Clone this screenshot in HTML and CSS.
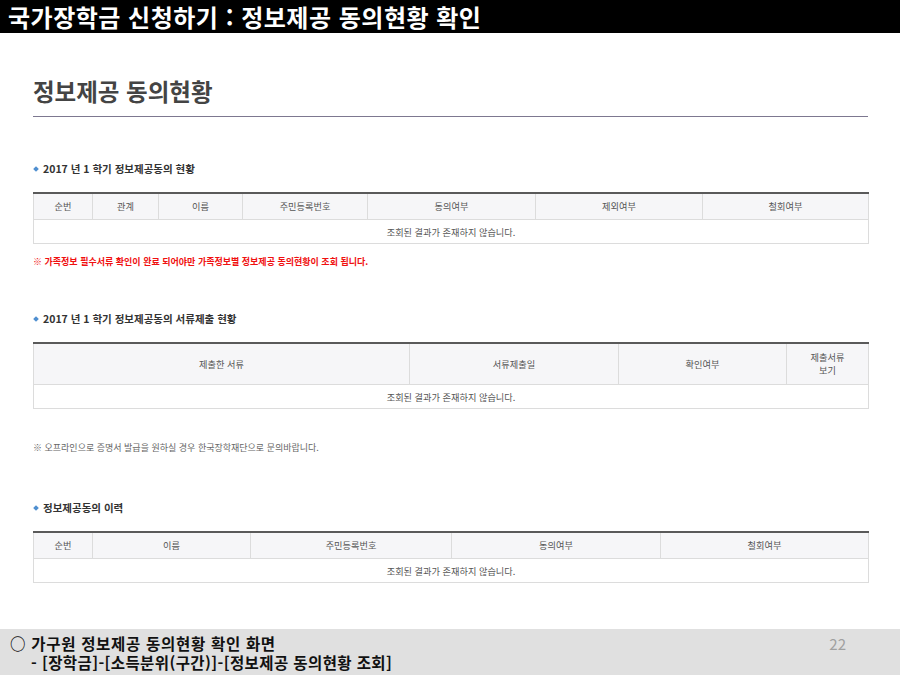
FILE: index.html
```html
<!DOCTYPE html>
<html lang="ko">
<head>
    <meta charset="UTF-8">
    <meta name="viewport" content="width=device-width, initial-scale=1.0">
    <title>정보제공 동의현황 확인</title>
    <link rel="stylesheet" href="styles.css">
</head>
<body>

<div class="slide">
    <div class="topbar">
        <h1>국가장학금 신청하기 : 정보제공 동의현황 확인</h1>
    </div>

    <div class="content">
        <h2 class="page-title">정보제공 동의현황</h2>

        <h3 class="sec-title sec-first"><span class="bullet"></span>2017 년 1 학기 정보제공동의 현황</h3>
        <table class="grid">
            <colgroup>
                <col style="width:59px"><col style="width:66px"><col style="width:84px"><col style="width:125px">
                <col style="width:168px"><col style="width:167px"><col style="width:166px">
            </colgroup>
            <thead>
                <tr class="head-row">
                    <th>순번</th><th>관계</th><th>이름</th><th>주민등록번호</th><th>동의여부</th><th>제외여부</th><th>철회여부</th>
                </tr>
            </thead>
            <tbody>
                <tr><td colspan="7">조회된 결과가 존재하지 않습니다.</td></tr>
            </tbody>
        </table>
        <p class="note-red">※ 가족정보 필수서류 확인이 완료 되어야만 가족정보별 정보제공 동의현황이 조회 됩니다.</p>

        <h3 class="sec-title sec-second"><span class="bullet"></span>2017 년 1 학기 정보제공동의 서류제출 현황</h3>
        <table class="grid">
            <colgroup>
                <col style="width:376px"><col style="width:209px"><col style="width:168px"><col style="width:82px">
            </colgroup>
            <thead>
                <tr class="head-row tall">
                    <th>제출한 서류</th><th>서류제출일</th><th>확인여부</th><th>제출서류<br>보기</th>
                </tr>
            </thead>
            <tbody>
                <tr><td colspan="4">조회된 결과가 존재하지 않습니다.</td></tr>
            </tbody>
        </table>
        <p class="note-gray">※ 오프라인으로 증명서 발급을 원하실 경우 한국장학재단으로 문의바랍니다.</p>

        <h3 class="sec-title sec-third"><span class="bullet"></span>정보제공동의 이력</h3>
        <table class="grid">
            <colgroup>
                <col style="width:59px"><col style="width:158px"><col style="width:201px"><col style="width:209px"><col style="width:208px">
            </colgroup>
            <thead>
                <tr class="head-row">
                    <th>순번</th><th>이름</th><th>주민등록번호</th><th>동의여부</th><th>철회여부</th>
                </tr>
            </thead>
            <tbody>
                <tr><td colspan="5">조회된 결과가 존재하지 않습니다.</td></tr>
            </tbody>
        </table>
    </div>

    <div class="footer">
        <div class="footer-text">
            <div class="main">○ 가구원 정보제공 동의현황 확인 화면</div>
            <div class="sub">- [장학금]-[소득분위(구간)]-[정보제공 동의현황 조회]</div>
        </div>
        <div class="page-num">22</div>
    </div>
</div>

</body>
</html>
```

FILE: styles.css
```css
body {
    margin: 0;
    padding: 0;
    font-family: "Noto Sans CJK KR", "Noto Sans", sans-serif;
    background-color: white;
}

.slide {
    width: 900px;
    height: 675px;
    display: flex;
    flex-direction: column;
    overflow: hidden;
}

.topbar {
    background-color: #000;
    height: 33px;
    padding-left: 8px;
}

.topbar h1 {
    margin: 0;
    color: white;
    font-size: 24px;
    font-weight: bold;
    line-height: 33px;
    letter-spacing: 0.5px;
}

.content {
    padding: 0 32px 0 33px;
}

.page-title {
    margin: 43px 0 0;
    padding-bottom: 10px;
    font-size: 23.5px;
    line-height: 30px;
    font-weight: bold;
    color: #444;
    border-bottom: 1px solid #7d7890;
}

.sec-title {
    margin: 0;
    font-size: 10.5px;
    line-height: 14px;
    font-weight: bold;
    color: #333;
    display: flex;
    align-items: center;
}

.sec-first {
    margin-top: 45px;
}

.sec-second {
    margin-top: 44px;
}

.sec-third {
    margin-top: 47px;
}

.bullet {
    width: 4px;
    height: 4px;
    background-color: #4f8fd0;
    transform: rotate(45deg);
    margin: 0 5px 0 1px;
}

.grid {
    width: 835px;
    margin-top: 16px;
    border-collapse: collapse;
    table-layout: fixed;
    font-size: 9.2px;
}

.grid th {
    height: 25px;
    padding: 0;
    background-color: #f6f6f8;
    color: #555;
    font-weight: normal;
    line-height: 13px;
    border-top: 2px solid #5a5a5a;
    border-left: 1px solid #dcdcdc;
    border-right: 1px solid #dcdcdc;
    border-bottom: 1px solid #dcdcdc;
}

.head-row.tall th {
    height: 40px;
}

.grid td {
    height: 23px;
    padding: 0;
    text-align: center;
    color: #555;
    border: 1px solid #dcdcdc;
}

.note-red {
    margin: 12px 0 0;
    font-size: 9px;
    line-height: 12px;
    font-weight: bold;
    color: #f01010;
}

.note-gray {
    margin: 33px 0 0;
    font-size: 9px;
    line-height: 12px;
    color: #666;
}

.footer {
    margin-top: auto;
    height: 46px;
    background-color: #e0e0e0;
    display: flex;
    justify-content: space-between;
}

.footer-text {
    padding: 5px 0 0 10px;
    font-size: 15.5px;
    line-height: 19px;
    font-weight: bold;
    color: #111;
}

.footer-text .main {
    letter-spacing: 0.7px;
}

.footer-text .sub {
    padding-left: 21px;
    letter-spacing: 0.4px;
}

.page-num {
    padding: 5px 54px 0 0;
    font-size: 15px;
    line-height: 19px;
    color: #a0a0a0;
}
```
